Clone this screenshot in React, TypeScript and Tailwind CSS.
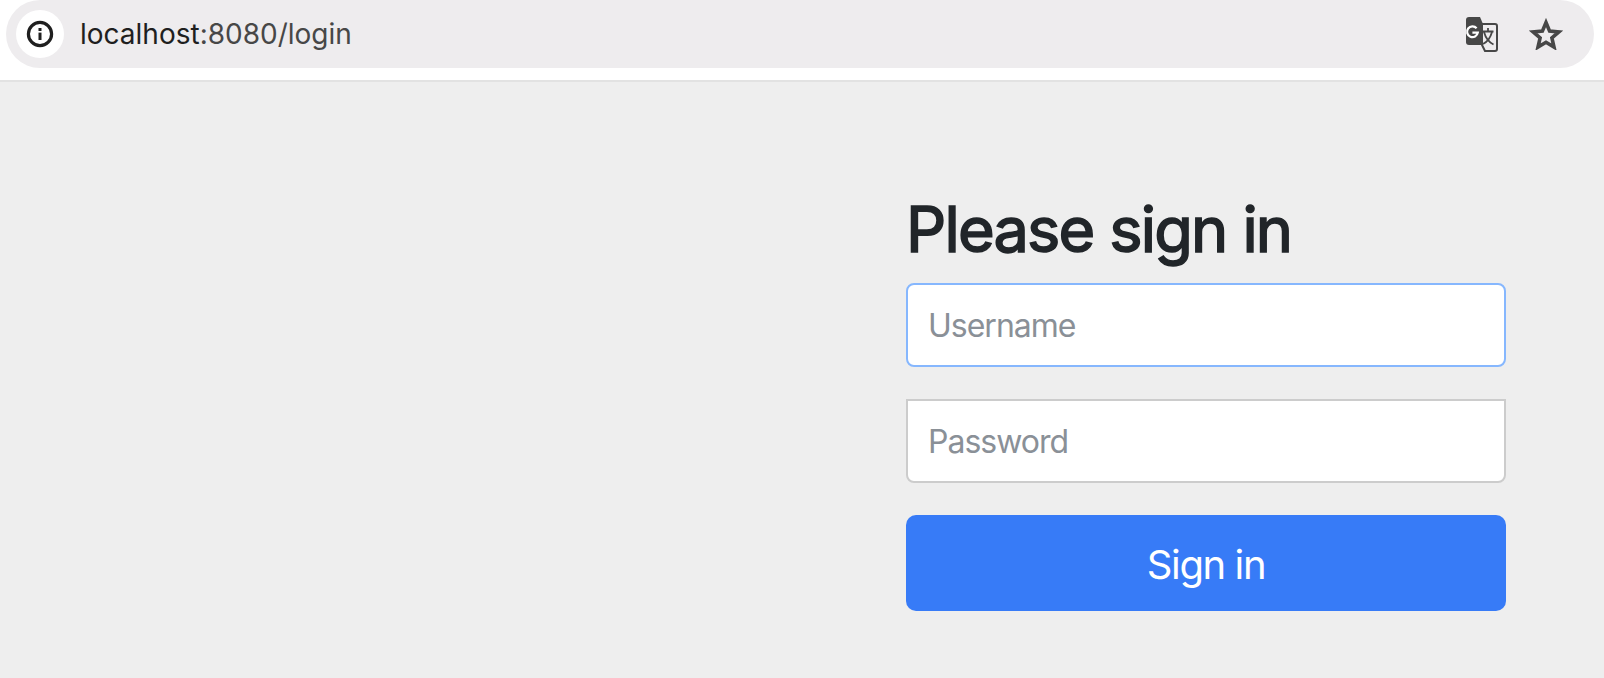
import React from 'react';

function InfoIcon() {
  return (
    <svg width="30" height="30" viewBox="0 0 30 30" fill="none">
      <circle cx="15" cy="15" r="11.6" stroke="#1f1f1f" strokeWidth="3.2" />
      <rect x="13.5" y="13.6" width="3" height="7.4" fill="#1f1f1f" />
      <rect x="13.5" y="9" width="3" height="3" fill="#1f1f1f" />
    </svg>
  );
}

function TranslateIcon() {
  return (
    <svg width="34" height="36" viewBox="0 0 34 36" fill="none">
      <path d="M4 1h11l3 7v21H4a3 3 0 0 1-3-3V4a3 3 0 0 1 3-3z" fill="#474747" />
      <path d="M17 8h13a2 2 0 0 1 2 2v23a2 2 0 0 1-2 2H20l-3-6z" fill="#eeecee" stroke="#474747" strokeWidth="2" />
      <path d="M11.600 12.200a5.400 5.400 0 1 0 1.200 4.400H7.400" stroke="#fff" strokeWidth="2.200" />
      <path d="M17.500 15.500h11M23 12v3.500M19 16c1.500 5.500 4.500 10 9.500 12.500M27 16c-1.500 5.500-5 10-9 12" stroke="#474747" strokeWidth="1.800" />
    </svg>
  );
}

function StarIcon() {
  return (
    <svg width="34" height="32" viewBox="0 0 34 32" fill="none">
      <path
        d="M17 4.500l3.600 8.600 9.300.8-7 6.100 2.100 9.100-8-4.800-8 4.800 2.100-9.100-7-6.100 9.300-.8z"
        stroke="#474747"
        strokeWidth="3.600"
        strokeLinejoin="miter"
      />
    </svg>
  );
}

export default function App() {
  return (
    <div className="flex h-[678px] w-[1604px] flex-col overflow-hidden bg-[#eeeeee] font-['Inter',sans-serif]">
      {/* Browser bar */}
      <div className="h-[82px] border-b-2 border-[#e2e2e2] bg-white pl-[6px] pr-[10px]">
        <div className="flex h-[68px] items-center rounded-full bg-[#eeecee] pl-[10px] pr-[31px]">
          <div className="flex h-[48px] w-[48px] items-center justify-center rounded-full bg-white">
            <InfoIcon />
          </div>
          <div className="ml-[16px] text-[28px] leading-none text-[#1f1f1f]">
            localhost<span className="text-[#474747]">:8080/login</span>
          </div>
          <div className="ml-auto flex items-center gap-[30px]">
            <TranslateIcon />
            <StarIcon />
          </div>
        </div>
      </div>

      {/* Login form */}
      <div className="flex flex-1 justify-end pr-[98px] pt-[110px]">
        <form className="flex w-[600px] flex-col">
          <h2 className="mb-[17px] text-[63px] font-normal leading-[74px] tracking-[-1.8px] text-[#212529] [-webkit-text-stroke:1.6px_#212529]">
            Please sign in
          </h2>
          <input
            placeholder="Username"
            className="h-[84px] w-full rounded-[8px] border-2 border-[#86b7fe] bg-white px-[20px] text-[32px] tracking-[-1px] text-[#212529] outline-none placeholder:text-[#8a9097]"
          />
          <input
            type="password"
            placeholder="Password"
            className="mt-[32px] h-[84px] w-full rounded-b-[8px] border-2 border-[#cccccc] bg-white px-[20px] text-[32px] tracking-[-1px] text-[#212529] outline-none placeholder:text-[#8a9097]"
          />
          <button type="button" className="mt-[32px] h-[96px] w-full rounded-[10px] bg-[#377bf7] pt-[3px] text-[40px] tracking-[-1.4px] text-white">
            Sign in
          </button>
        </form>
      </div>
    </div>
  );
}
